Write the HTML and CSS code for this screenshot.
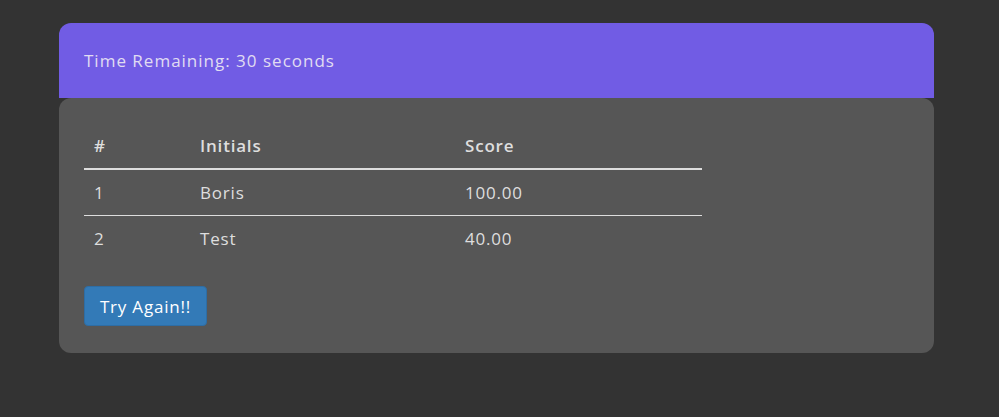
FILE: index.html
```html
<!DOCTYPE html>
<html>
<head>
<meta charset="utf-8">
<link rel="stylesheet" href="styles.css">
</head>
<body>
<div class="wrap">
  <div class="timer">Time Remaining: 30 seconds</div>
  <div class="card">
    <table class="scores">
      <thead>
        <tr><th class="c1">#</th><th class="c2">Initials</th><th class="c3">Score</th></tr>
      </thead>
      <tbody>
        <tr><td>1</td><td>Boris</td><td>100.00</td></tr>
        <tr><td>2</td><td>Test</td><td>40.00</td></tr>
      </tbody>
    </table>
    <button class="btn">Try Again!!</button>
  </div>
</div>
</body>
</html>
```
FILE: styles.css
```css
html, body {
  margin: 0;
  padding: 0;
  background: #333333;
  font-family: "Open Sans", "DejaVu Sans", sans-serif;
  color: #dddddd;
}
.wrap {
  width: 875px;
  margin: 23px 0 0 59px;
}
.timer {
  background: #715ce4;
  border-radius: 12px 12px 0 0;
  height: 75px;
  box-sizing: border-box;
  padding: 0 25px;
  display: flex;
  align-items: center;
  font-size: 17px;
  letter-spacing: 1px;
  color: #e0dcf2;
}
.card {
  background: #565656;
  border-radius: 12px;
  padding: 25px 25px 27px;
}
.scores {
  width: 618px;
  border-collapse: collapse;
  font-size: 17px;
  letter-spacing: 0.8px;
  color: #dedede;
}
.scores th, .scores td {
  text-align: left;
  padding: 0 10px;
  height: 45px;
}
.scores th {
  font-weight: 600;
  border-bottom: 2px solid #dddddd;
}
.scores tbody tr:first-child td {
  border-bottom: 1px solid #dddddd;
}
.c1 { width: 86px; }
.c2 { width: 245px; }
.btn {
  margin-top: 25px;
  display: block;
  width: 123px;
  height: 40px;
  background: #337ab7;
  border: 1px solid #2e6da4;
  border-radius: 4px;
  color: #ffffff;
  font-family: inherit;
  font-size: 17px;
  letter-spacing: 0.8px;
  padding: 0;
}
```
